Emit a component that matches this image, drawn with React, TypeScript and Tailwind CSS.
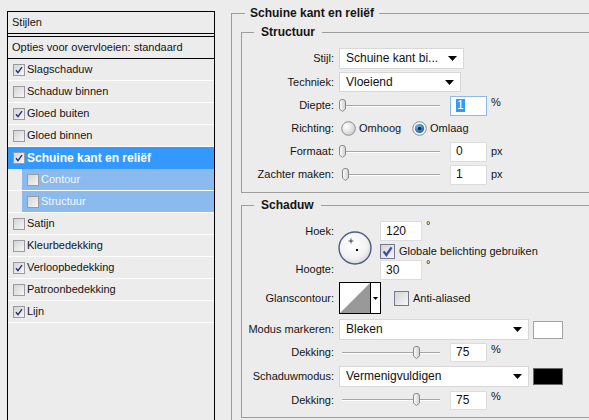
import React from 'react';

type BoxProps = { on?: boolean; big?: boolean };

// small Windows-style checkbox, drawn so it looks the same everywhere
const Box: React.FC<BoxProps> = ({ on, big }) => {
  const s = big ? 15 : 12;
  return (
    <svg width={s} height={s} viewBox={`0 0 ${s} ${s}`} className="shrink-0">
      <defs>
        <linearGradient id="boxfill" x1="0" y1="0" x2="1" y2="1">
          <stop offset="0" stopColor="#d2d2d2" />
          <stop offset="1" stopColor="#f8f8f8" />
        </linearGradient>
      </defs>
      <rect x="0.5" y="0.5" width={s - 1} height={s - 1} fill="url(#boxfill)" stroke={big ? '#75798f' : '#9a9b9f'} />
      {on && !big && <path d="M3 6.2 L5 8.6 L9 3.2" fill="none" stroke="#242c7a" strokeWidth="1.4" />}
      {on && big && <path d="M3.6 7.4 L6.4 11 L11.6 3.4" fill="none" stroke="#3b4fa6" strokeWidth="2.3" />}
    </svg>
  );
};

const Radio: React.FC<{ on?: boolean }> = ({ on }) => (
  <svg width="15" height="15" viewBox="0 0 15 15" className="shrink-0">
    <defs>
      <radialGradient id="radoff" cx="0.35" cy="0.35" r="0.7">
        <stop offset="0" stopColor="#ffffff" />
        <stop offset="1" stopColor="#cfcfcf" />
      </radialGradient>
      <radialGradient id="radon" cx="0.4" cy="0.35" r="0.7">
        <stop offset="0" stopColor="#7cc4f2" />
        <stop offset="1" stopColor="#0b5a9a" />
      </radialGradient>
    </defs>
    <circle cx="7.5" cy="7.5" r="6.8" fill={on ? '#f4f4f4' : 'url(#radoff)'} stroke="#8b8d93" />
    {on && <circle cx="7.5" cy="7.5" r="4.6" fill="url(#radon)" />}
    {on && <circle cx="7.5" cy="7.5" r="1.8" fill="#0a2b48" />}
  </svg>
);

const Select: React.FC<{ w: string; text: string }> = ({ w, text }) => (
  <div className={`${w} bg-white border border-[#d8d8d8] flex items-center pl-[6px] pr-[6px] text-[12px] text-[#111]`}>
    <span className="flex-1 whitespace-nowrap overflow-hidden">{text}</span>
    <svg width="9" height="5" viewBox="0 0 9 5" className="shrink-0">
      <path d="M0 0H9L4.5 5Z" fill="#000" />
    </svg>
  </div>
);

const Num: React.FC<{ v: string; focus?: boolean; w?: string }> = ({ v, focus, w = 'w-[37px] h-[20px]' }) => (
  <div className={`${w} bg-white border ${focus ? 'border-[#8cbbe8]' : 'border-[#dcdcdc]'} flex items-center pl-[5px] text-[12px] text-[#111]`}>
    {focus ? <span className="bg-[#3399ff] text-white px-[1px]">{v}</span> : v}
  </div>
);

// horizontal slider: track plus thumb, "at" is 0..1
const Slider: React.FC<{ at: number }> = ({ at }) => (
  <div className="relative w-[108px] h-[14px] ml-[3px] shrink-0">
    <div className="absolute left-[5px] w-[98px] top-[6px] h-[2px] border-t border-[#a6a6a6] bg-white" />
    <svg width="9" height="13" viewBox="0 0 9 13" className="absolute top-0" style={{ left: 5 + at * 98 - 4.5 }}>
      <defs>
        <linearGradient id="thumb" x1="0" y1="0" x2="1" y2="0">
          <stop offset="0" stopColor="#ffffff" />
          <stop offset="1" stopColor="#cdcdcd" />
        </linearGradient>
      </defs>
      <path d="M1.5 3 Q1.5 0.5 4 0.5 H5 Q7.5 0.5 7.5 3 V10 L4.5 12.5 L1.5 10 Z" fill="url(#thumb)" stroke="#8a8a8a" />
    </svg>
  </div>
);

const Row: React.FC<{ h: string; label: string; children?: React.ReactNode }> = ({ h, label, children }) => (
  <div className={`flex items-center ${h}`}>
    <span className="w-[92px] text-right shrink-0 whitespace-nowrap">{label}</span>
    {children}
  </div>
);

const styles = [
  { name: 'Slagschaduw', on: true },
  { name: 'Schaduw binnen', on: false },
  { name: 'Gloed buiten', on: true },
  { name: 'Gloed binnen', on: false },
];
const rest = [
  { name: 'Satijn', on: false },
  { name: 'Kleurbedekking', on: false },
  { name: 'Verloopbedekking', on: true },
  { name: 'Patroonbedekking', on: false },
  { name: 'Lijn', on: true },
];

const StyleList: React.FC = () => (
  <div className="mt-[11px] ml-[7px] w-[208px] h-[409px] shrink-0 border-x border-t border-black">
    <div className="h-[22px] border-b border-black flex items-center pl-[4px]">Stijlen</div>
    <div className="mt-[2px] h-[23px] border-y border-black flex items-center pl-[4px]">Opties voor overvloeien: standaard</div>
    {styles.map((s) => (
      <div key={s.name} className="h-[22px] border-b border-white flex items-center pl-[5px] gap-[2px]">
        <Box on={s.on} />
        <span>{s.name}</span>
      </div>
    ))}
    <div className="h-[22px] bg-[#3399ff] flex items-center pl-[5px] gap-[2px] text-white font-bold text-[12px]">
      <Box on />
      <span>Schuine kant en reliëf</span>
    </div>
    {['Contour', 'Structuur'].map((n) => (
      <div key={n} className="h-[22px] border-b border-white pl-[14px] flex">
        <div className="flex-1 bg-[#8abaee] flex items-center pl-[5px] gap-[2px] text-[#f4f8ff]">
          <Box />
          <span>{n}</span>
        </div>
      </div>
    ))}
    {rest.map((s) => (
      <div key={s.name} className="h-[22px] border-b border-white flex items-center pl-[5px] gap-[2px]">
        <Box on={s.on} />
        <span>{s.name}</span>
      </div>
    ))}
  </div>
);

const AngleDial: React.FC = () => (
  <svg width="34" height="34" viewBox="0 0 34 34" className="shrink-0">
    <defs>
      <radialGradient id="dial" cx="0.45" cy="0.4" r="0.6">
        <stop offset="0" stopColor="#ffffff" />
        <stop offset="0.7" stopColor="#f2f2f2" />
        <stop offset="1" stopColor="#d8d8d8" />
      </radialGradient>
    </defs>
    <circle cx="17" cy="17" r="16" fill="url(#dial)" stroke="#4f5d80" strokeWidth="1.4" />
    <path d="M13 7.5V12.5M10.5 10H15.5" stroke="#222" strokeWidth="0.8" />
    <rect x="18" y="18" width="2" height="2" fill="#000" />
  </svg>
);

const GlossSwatch: React.FC = () => (
  <div className="w-[42px] h-[32px] border border-black flex bg-white shrink-0 ml-[5px]">
    <svg width="30" height="30" viewBox="0 0 30 30" className="shrink-0">
      <path d="M0 30L30 0V30Z" fill="#999" />
    </svg>
    <div className="flex-1 border-l border-black flex items-center justify-center">
      <svg width="5" height="3" viewBox="0 0 5 3">
        <path d="M0 0H5L2.5 3Z" fill="#000" />
      </svg>
    </div>
  </div>
);

const App: React.FC = () => {
  return (
    <div className="w-[589px] h-[420px] overflow-hidden bg-[#ececec] flex font-['Liberation_Sans',Arial,sans-serif] text-[11px] leading-[13px] text-[#141414]">
      <StyleList />

      <div className="ml-[16px] mt-[7px] shrink-0">
        <fieldset className="w-[380px] border border-[#9d9d9d] pl-[9px] pt-[6px] pb-[20px]">
          <legend className="ml-[4px] px-[5px] text-[12px] font-bold leading-[13px]">Schuine kant en reliëf</legend>

          {/* Structuur */}
          <fieldset className="border border-[#9d9d9d] pt-[8px] pb-[6px]">
            <legend className="ml-[12px] px-[7px] text-[12px] font-bold leading-[13px]">Structuur</legend>
            <Row h="h-[23px]" label="Stijl:">
              <div className="ml-[5px]"><Select w="w-[125px] h-[21px]" text="Schuine kant bi..." /></div>
            </Row>
            <Row h="h-[24px]" label="Techniek:">
              <div className="ml-[5px]"><Select w="w-[122px] h-[20px]" text="Vloeiend" /></div>
            </Row>
            <Row h="h-[23px]" label="Diepte:">
              <Slider at={0} />
              <div className="ml-[5px]"><Num v="1" focus /></div>
              <span className="ml-[4px] self-start mt-[2px]">%</span>
            </Row>
            <Row h="h-[23px]" label="Richting:">
              <div className="ml-[7px] w-[71px] flex items-center gap-[3px]">
                <Radio />
                <span>Omhoog</span>
              </div>
              <div className="flex items-center gap-[3px]">
                <Radio on />
                <span>Omlaag</span>
              </div>
            </Row>
            <Row h="h-[23px]" label="Formaat:">
              <Slider at={0} />
              <div className="ml-[5px]"><Num v="0" /></div>
              <span className="ml-[4px]">px</span>
            </Row>
            <Row h="h-[23px]" label="Zachter maken:">
              <Slider at={0.04} />
              <div className="ml-[5px]"><Num v="1" /></div>
              <span className="ml-[4px]">px</span>
            </Row>
          </fieldset>

          {/* Schaduw */}
          <fieldset className="mt-[6px] border border-[#9d9d9d] pt-[8px] pb-[6px]">
            <legend className="ml-[12px] px-[7px] text-[12px] font-bold leading-[13px]">Schaduw</legend>

            <div className="flex h-[61px]">
              <div className="w-[92px] shrink-0 flex flex-col">
                <div className="mt-[1px] h-[20px] flex items-center justify-end">Hoek:</div>
                <div className="mt-[18px] h-[20px] flex items-center justify-end">Hoogte:</div>
              </div>
              <div className="ml-[4px] mt-[11px]">
                <AngleDial />
              </div>
              <div className="ml-[8px] flex flex-col">
                <div className="mt-[1px] flex">
                  <Num v="120" w="w-[42px] h-[20px]" />
                  <span className="ml-[4px] -mt-[2px]">°</span>
                </div>
                <div className="mt-[2px] h-[16px] flex items-center gap-[4px]">
                  <Box big on />
                  <span className="whitespace-nowrap">Globale belichting gebruiken</span>
                </div>
                <div className="mt-[1px] flex">
                  <Num v="30" w="w-[42px] h-[20px]" />
                  <span className="ml-[4px] -mt-[2px]">°</span>
                </div>
              </div>
            </div>

            <div className="mt-[1px] flex items-center h-[32px]">
              <span className="w-[92px] text-right shrink-0">Glanscontour:</span>
              <GlossSwatch />
              <div className="ml-[13px] flex items-center gap-[4px]">
                <Box big />
                <span>Anti-aliased</span>
              </div>
            </div>

            <Row h="h-[23px] mt-[4px]" label="Modus markeren:">
              <div className="ml-[5px]"><Select w="w-[190px] h-[21px]" text="Bleken" /></div>
              <div className="ml-[4px] w-[30px] h-[18px] bg-white border border-[#a3a3a3]" />
            </Row>
            <Row h="h-[23px]" label="Dekking:">
              <Slider at={0.76} />
              <div className="ml-[5px]"><Num v="75" w="w-[37px] h-[19px]" /></div>
              <span className="ml-[4px] self-start mt-[2px]">%</span>
            </Row>
            <Row h="h-[25px]" label="Schaduwmodus:">
              <div className="ml-[5px]"><Select w="w-[190px] h-[21px]" text="Vermenigvuldigen" /></div>
              <div className="ml-[4px] w-[30px] h-[17px] bg-black border border-[#6a6a6a]" />
            </Row>
            <Row h="h-[22px]" label="Dekking:">
              <Slider at={0.76} />
              <div className="ml-[5px]"><Num v="75" w="w-[37px] h-[19px]" /></div>
              <span className="ml-[4px] self-start mt-[1px]">%</span>
            </Row>
          </fieldset>
        </fieldset>
      </div>
    </div>
  );
};

export default App;
